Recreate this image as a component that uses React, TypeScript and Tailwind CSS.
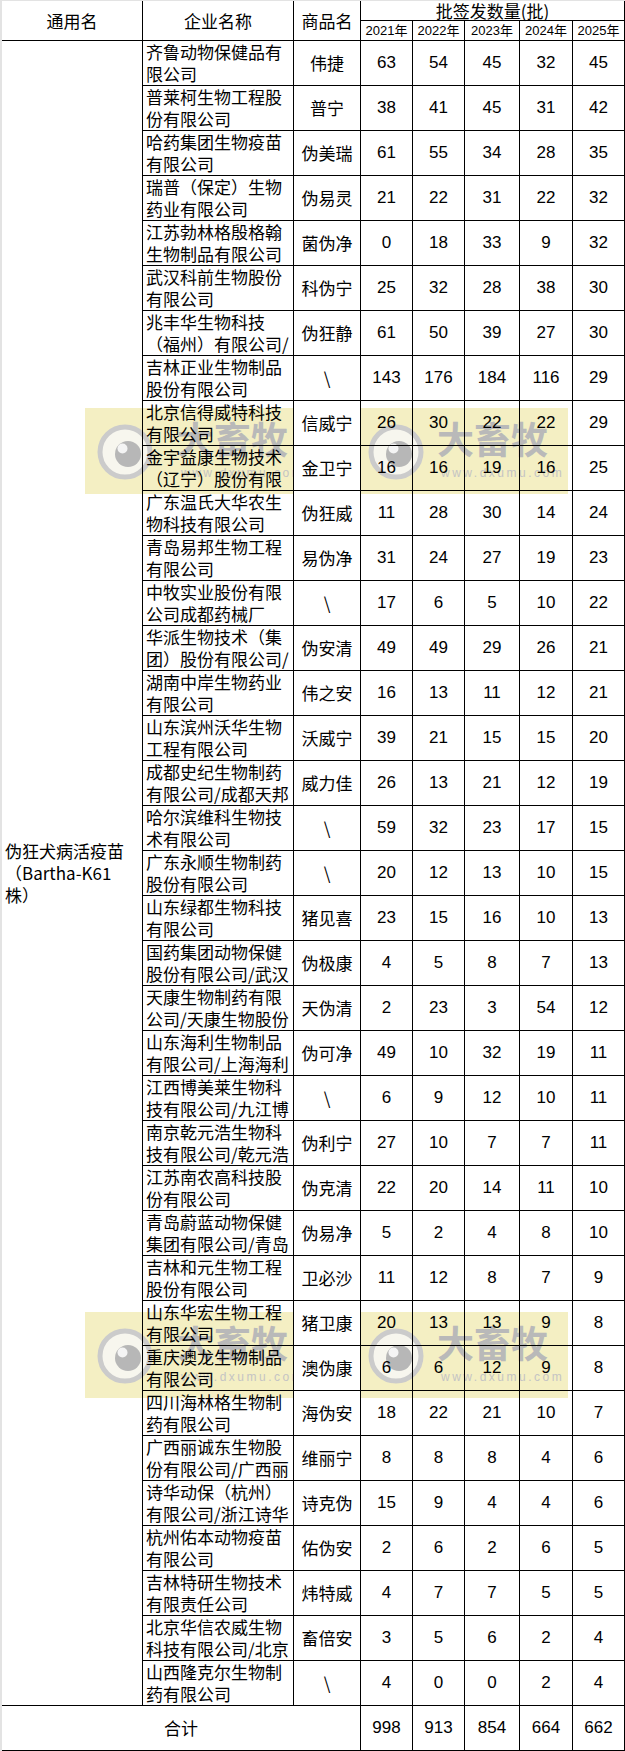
import React from "react";

const CJK = "font-['Noto_Sans_CJK_SC','Noto_Sans_CJK_JP',sans-serif]";
const NUM = "font-['Liberation_Sans','Noto_Sans_CJK_SC',Arial,sans-serif]";
const CELL = "border-r border-b border-black";

type Row = [string, string, string, number[]];

const rows: Row[] = [
  ["齐鲁动物保健品有", "限公司", "伟捷", [63, 54, 45, 32, 45]],
  ["普莱柯生物工程股", "份有限公司", "普宁", [38, 41, 45, 31, 42]],
  ["哈药集团生物疫苗", "有限公司", "伪美瑞", [61, 55, 34, 28, 35]],
  ["瑞普（保定）生物", "药业有限公司", "伪易灵", [21, 22, 31, 22, 32]],
  ["江苏勃林格殷格翰", "生物制品有限公司", "菌伪净", [0, 18, 33, 9, 32]],
  ["武汉科前生物股份", "有限公司", "科伪宁", [25, 32, 28, 38, 30]],
  ["兆丰华生物科技", "（福州）有限公司/", "伪狂静", [61, 50, 39, 27, 30]],
  ["吉林正业生物制品", "股份有限公司", "\\", [143, 176, 184, 116, 29]],
  ["北京信得威特科技", "有限公司", "信威宁", [26, 30, 22, 22, 29]],
  ["金宇益康生物技术", "（辽宁）股份有限", "金卫宁", [16, 16, 19, 16, 25]],
  ["广东温氏大华农生", "物科技有限公司", "伪狂威", [11, 28, 30, 14, 24]],
  ["青岛易邦生物工程", "有限公司", "易伪净", [31, 24, 27, 19, 23]],
  ["中牧实业股份有限", "公司成都药械厂", "\\", [17, 6, 5, 10, 22]],
  ["华派生物技术（集", "团）股份有限公司/", "伪安清", [49, 49, 29, 26, 21]],
  ["湖南中岸生物药业", "有限公司", "伟之安", [16, 13, 11, 12, 21]],
  ["山东滨州沃华生物", "工程有限公司", "沃威宁", [39, 21, 15, 15, 20]],
  ["成都史纪生物制药", "有限公司/成都天邦", "威力佳", [26, 13, 21, 12, 19]],
  ["哈尔滨维科生物技", "术有限公司", "\\", [59, 32, 23, 17, 15]],
  ["广东永顺生物制药", "股份有限公司", "\\", [20, 12, 13, 10, 15]],
  ["山东绿都生物科技", "有限公司", "猪见喜", [23, 15, 16, 10, 13]],
  ["国药集团动物保健", "股份有限公司/武汉", "伪极康", [4, 5, 8, 7, 13]],
  ["天康生物制药有限", "公司/天康生物股份", "天伪清", [2, 23, 3, 54, 12]],
  ["山东海利生物制品", "有限公司/上海海利", "伪可净", [49, 10, 32, 19, 11]],
  ["江西博美莱生物科", "技有限公司/九江博", "\\", [6, 9, 12, 10, 11]],
  ["南京乾元浩生物科", "技有限公司/乾元浩", "伪利宁", [27, 10, 7, 7, 11]],
  ["江苏南农高科技股", "份有限公司", "伪克清", [22, 20, 14, 11, 10]],
  ["青岛蔚蓝动物保健", "集团有限公司/青岛", "伪易净", [5, 2, 4, 8, 10]],
  ["吉林和元生物工程", "股份有限公司", "卫必沙", [11, 12, 8, 7, 9]],
  ["山东华宏生物工程", "有限公司", "猪卫康", [20, 13, 13, 9, 8]],
  ["重庆澳龙生物制品", "有限公司", "澳伪康", [6, 6, 12, 9, 8]],
  ["四川海林格生物制", "药有限公司", "海伪安", [18, 22, 21, 10, 7]],
  ["广西丽诚东生物股", "份有限公司/广西丽", "维丽宁", [8, 8, 8, 4, 6]],
  ["诗华动保（杭州）", "有限公司/浙江诗华", "诗克伪", [15, 9, 4, 4, 6]],
  ["杭州佑本动物疫苗", "有限公司", "佑伪安", [2, 6, 2, 6, 5]],
  ["吉林特研生物技术", "有限责任公司", "炜特威", [4, 7, 7, 5, 5]],
  ["北京华信农威生物", "科技有限公司/北京", "畜倍安", [3, 5, 6, 2, 4]],
  ["山西隆克尔生物制", "药有限公司", "\\", [4, 0, 0, 2, 4]],
];

const years = ["2021年", "2022年", "2023年", "2024年", "2025年"];
const totals = [998, 913, 854, 664, 662];

function Ring() {
  return (
    <svg width="56" height="56" viewBox="0 0 56 56">
      <circle cx="28" cy="28" r="25" fill="#f7f6ee" stroke="#cbcbcb" strokeWidth="5" />
      <circle cx="31" cy="30" r="13" fill="#b7b7b7" />
      <circle cx="25.5" cy="24.5" r="5" fill="#f4f4f4" />
    </svg>
  );
}

function Watermark({ top }: { top: string }) {
  return (
    <div className={`absolute left-[83px] -z-10 h-[86px] w-[483px] bg-[#f4efc3] ${top}`}>
      <div className="absolute left-[12px] top-[16px]">
        <Ring />
      </div>
      <div className={`absolute left-[92px] top-[6px] text-[37px] font-bold leading-[48px] text-[#b9b9b9] ${CJK}`}>
        大畜牧
      </div>
      <div className={`absolute left-[96px] top-[56px] text-[12px] tracking-[2.5px] text-[#c4c4c4] ${NUM}`}>
        www.dxumu.com
      </div>
      <div className="absolute left-[283px] top-[16px]">
        <Ring />
      </div>
      <div className={`absolute left-[352px] top-[6px] text-[37px] font-bold leading-[48px] text-[#b9b9b9] ${CJK}`}>
        大畜牧
      </div>
      <div className={`absolute left-[356px] top-[56px] text-[12px] tracking-[2.5px] text-[#c4c4c4] ${NUM}`}>
        www.dxumu.com
      </div>
    </div>
  );
}

export default function App() {
  return (
    <div className="w-[625px] bg-[#e3e3e3] pl-[2px] pt-[1px]">
      <div className="relative isolate grid grid-cols-[141px_151px_67px_52px_52px_55px_53px_52px] grid-rows-[20px_20px_repeat(37,45px)_45px] bg-white text-black">
        <Watermark top="top-[407px]" />
        <Watermark top="top-[1311px]" />

        <div className={`${CELL} row-span-2 flex items-center justify-center text-[17px] ${CJK}`}>通用名</div>
        <div className={`${CELL} row-span-2 flex items-center justify-center text-[17px] ${CJK}`}>企业名称</div>
        <div className={`${CELL} row-span-2 flex items-center justify-center bg-white text-[17px] ${CJK}`}>商品名</div>
        <div className={`${CELL} col-span-5 flex items-center justify-center text-[17px] leading-none ${CJK}`}>
          批签发数量(批)
        </div>
        {years.map((y) => (
          <div key={y} className={`${CELL} flex items-center justify-center text-[13px] leading-none ${NUM}`}>
            {y}
          </div>
        ))}

        <div className={`${CELL} row-span-37 flex flex-col justify-center pl-[3px] text-[17px] leading-[22px] ${CJK}`}>
          <div className="whitespace-nowrap">伪狂犬病活疫苗</div>
          <div className="whitespace-nowrap">（Bartha-K61</div>
          <div className="whitespace-nowrap">株）</div>
        </div>

        {rows.map(([l1, l2, brand, nums], i) => (
          <React.Fragment key={i}>
            <div className={`${CELL} flex flex-col justify-center pl-[3px] text-[17px] leading-[22px] ${CJK}`}>
              <div className="whitespace-nowrap">{l1}</div>
              <div className="whitespace-nowrap">{l2}</div>
            </div>
            <div className={`${CELL} flex items-center justify-center bg-white text-[17px] ${CJK}`}>{brand}</div>
            {nums.map((n, j) => (
              <div key={j} className={`${CELL} flex items-center justify-center text-[17px] ${NUM}`}>
                {n}
              </div>
            ))}
          </React.Fragment>
        ))}

        <div className={`${CELL} col-span-3 flex items-center justify-center text-[17px] ${CJK}`}>合计</div>
        {totals.map((n, j) => (
          <div key={j} className={`${CELL} flex items-center justify-center text-[17px] ${NUM}`}>
            {n}
          </div>
        ))}
      </div>
    </div>
  );
}
